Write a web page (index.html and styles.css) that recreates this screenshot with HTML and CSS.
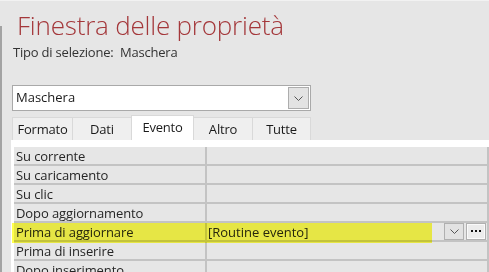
FILE: index.html
```html
<!DOCTYPE html>
<html lang="it">
<head>
    <meta charset="UTF-8">
    <meta name="viewport" content="width=device-width, initial-scale=1.0">
    <link rel="stylesheet" href="styles.css">
    <title>Finestra delle proprietà</title>
</head>
<body>
  <div class="window">
    <div class="edge"></div>
    <div class="sheet">
      <h1 class="title">Finestra delle proprietà</h1>
      <div class="seltype">Tipo di selezione:&nbsp; Maschera</div>

      <div class="combo">
        <span class="combo-text">Maschera</span>
        <span class="drop">
          <svg width="9" height="5" viewBox="0 0 9 5"><path d="M0.5 0.5 L4.5 4.5 L8.5 0.5" fill="none" stroke="#555" stroke-width="1"/></svg>
        </span>
      </div>

      <div class="tabs">
        <div class="tab t-formato">Formato</div>
        <div class="tab t-dati">Dati</div>
        <div class="tab t-evento active">Evento</div>
        <div class="tab t-altro">Altro</div>
        <div class="tab t-tutte">Tutte</div>
      </div>

      <div class="panel">
        <div class="grid">
          <div class="row"><div class="name">Su corrente</div><div class="value"></div></div>
          <div class="row"><div class="name">Su caricamento</div><div class="value"></div></div>
          <div class="row"><div class="name">Su clic</div><div class="value"></div></div>
          <div class="row"><div class="name">Dopo aggiornamento</div><div class="value"></div></div>
          <div class="row marked">
            <div class="name">Prima di aggiornare</div>
            <div class="value">
              <span class="value-text">[Routine evento]</span>
              <span class="btn btn-drop">
                <svg width="9" height="5" viewBox="0 0 9 5"><path d="M0.5 0.5 L4.5 4.5 L8.5 0.5" fill="none" stroke="#555" stroke-width="1"/></svg>
              </span>
              <span class="btn btn-dots">
                <svg width="10" height="3" viewBox="0 0 10 3"><rect x="0" y="0" width="2" height="2" fill="#111"/><rect x="4" y="0" width="2" height="2" fill="#111"/><rect x="8" y="0" width="2" height="2" fill="#111"/></svg>
              </span>
            </div>
          </div>
          <div class="row"><div class="name">Prima di inserire</div><div class="value"></div></div>
          <div class="row"><div class="name">Dopo inserimento</div><div class="value"></div></div>
        </div>
      </div>
    </div>
  </div>
</body>
</html>
```

FILE: styles.css
```css
html, body {
  margin: 0;
  padding: 0;
  background: #e6e6e6;
  font-family: "Open Sans", "Noto Sans", Arial, sans-serif;
  color: #262626;
  overflow: hidden;
}
.window {
  display: flex;
  height: 272px;
  box-sizing: border-box;
  border-top: 1px solid #f2f2f2;
  overflow: hidden;
}
.edge {
  width: 2px;
  margin-top: 25px;
  background: #a3a3a3;
}
.sheet {
  flex: 1;
  padding-left: 10px;
  display: flex;
  flex-direction: column;
}
.sheet > * {
  flex-shrink: 0;
}
.title {
  margin: 7px 0 0 5px;
  font-weight: 300;
  font-size: 26px;
  line-height: 34px;
  color: #a4373a;
  letter-spacing: -0.2px;
}
.seltype {
  margin: 2px 0 0 1px;
  font-size: 13px;
  line-height: 17px;
  color: #333;
  letter-spacing: -0.2px;
}
.combo {
  margin-top: 24px;
  width: 297px;
  height: 24px;
  background: #fff;
  border: 1px solid #a9a9a9;
  display: flex;
  align-items: center;
  justify-content: space-between;
}
.combo-text {
  padding: 0 0 2px 3px;
  font-size: 13px;
  color: #1a1a1a;
}
.drop {
  width: 19px;
  height: 20px;
  margin-right: 1px;
  background: #e3e3e3;
  border: 1px solid #adadad;
  display: flex;
  align-items: center;
  justify-content: center;
}
.tabs {
  margin-top: 5px;
  display: flex;
  align-items: flex-end;
  height: 24px;
}
.tab {
  height: 23px;
  box-sizing: border-box;
  background: #efefef;
  border: 1px solid #d9d9d9;
  border-bottom: none;
  margin-right: -1px;
  font-size: 13px;
  line-height: 22px;
  text-align: center;
  color: #1a1a1a;
  letter-spacing: -0.2px;
}
.tab.active {
  background: #fff;
  height: 25px;
  line-height: 22px;
  position: relative;
}
.t-formato { width: 61px; }
.t-dati { width: 60px; }
.t-evento { width: 63px; }
.t-altro { width: 60px; }
.t-tutte { width: 59px; }

.panel {
  flex: 1;
  margin-left: -1px;
  background: #fff;
  padding: 7px 0 0 3px;
}
.grid {
  display: flex;
  flex-direction: column;
  gap: 2px;
  background: #c3c3c3;
  padding-right: 2px;
}
.row {
  display: flex;
  gap: 2px;
  height: 17px;
}
.name {
  width: 189px;
  background: #e6e6e6;
  padding: 1px 0 0 2px;
  font-size: 13px;
  line-height: 16px;
  white-space: nowrap;
  letter-spacing: -0.1px;
}
.value {
  flex: 1;
  background: #e6e6e6;
  display: flex;
  align-items: flex-start;
  font-size: 13px;
  line-height: 16px;
}
.value-text {
  flex: 1;
  padding: 1px 0 0 1px;
}
.btn {
  box-sizing: border-box;
  width: 20px;
  height: 17px;
  display: flex;
  align-items: center;
  justify-content: center;
  border: 1px solid #b0b0b0;
}
.btn-drop {
  background: #e2e2e2;
  margin-right: 2px;
}
.btn-dots {
  background: #ececec;
  box-shadow: inset 0 0 0 1px #fafafa;
  margin-right: 1px;
}
.row.marked {
  position: relative;
}
.row.marked::after {
  content: "";
  position: absolute;
  left: -2px;
  top: 0;
  width: 420px;
  height: 20px;
  background: #ffff4c;
  mix-blend-mode: multiply;
  pointer-events: none;
}
```
